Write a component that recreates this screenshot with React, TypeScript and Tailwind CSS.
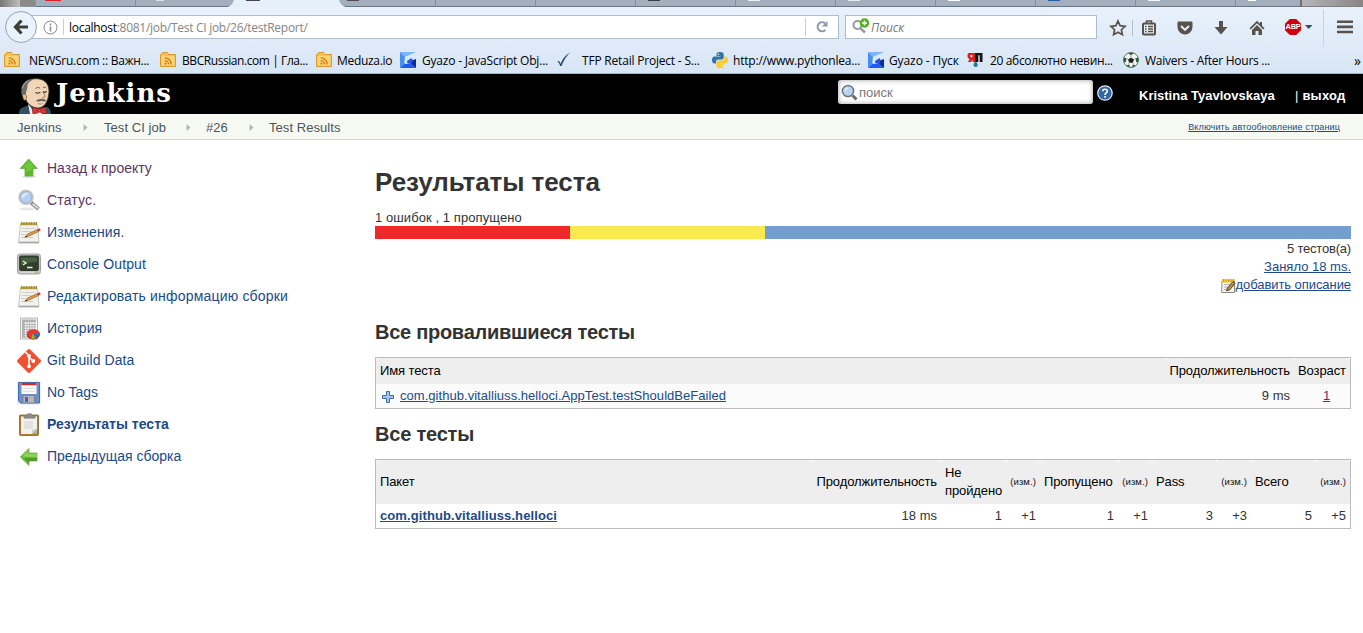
import React from "react";

/* ---------- shared ---------- */

const Rss = () => (
  <svg width="16" height="16" viewBox="0 0 16 16">
    <path d="M.5 2.500h1l1-2h5l1 2h7v12H.5z" fill="#f3c14e" stroke="#d99b2b" />
    <path d="M1.500 4h13v9.500h-13z" fill="#fbdc85" opacity=".7" />
    <circle cx="5.500" cy="11.600" r="1.100" fill="#d97a14" />
    <path d="M4.700 8.600a3.600 3.600 0 0 1 3.800 3.800M4.700 5.900a6.300 6.300 0 0 1 6.500 6.500" fill="none" stroke="#d97a14" strokeWidth="1.300" />
  </svg>
);

const Gyazo = () => (
  <svg width="16" height="16" viewBox="0 0 16 16">
    <path d="M0 0h16L5 5z" fill="#79b6fc" />
    <path d="M0 0l5 5-.5 6.500L0 16z" fill="#4690f2" />
    <path d="M0 16l4.500-4.500L11 12l5 4z" fill="#1c5cf2" />
    <path d="M16 16V6.500L11 8v4z" fill="#0b2a9c" />
    <path d="M16 .5L5 5l-.5 6.500L11 12l.5-3.500L16 7z" fill="#dce9fb" />
    <path d="M7 9l4.500-3 1.500 3-2 3-3.500-.5z" fill="#2456dc" />
  </svg>
);

const Check = () => (
  <svg width="16" height="16" viewBox="0 0 16 16">
    <path d="M1.500 9.500c1.500-1 2.300 0 3 2.500C7 6 10 3 14.500 0 10.500 4 7.500 8.500 5.500 14H4.200C3.500 12 2.800 10 1.500 9.500z" fill="#27486f" />
  </svg>
);

const Python = () => (
  <svg width="16" height="16" viewBox="0 0 16 16">
    <path d="M8 0C5 0 4.500 1 4.500 2.300V4H8.300v.6H2.500C1 4.600 0 6 0 8s1 3.500 2.300 3.500H4V9.600C4 8.300 5 7.500 6.200 7.500h3.600c1.100 0 1.900-.9 1.900-2V2.300C11.700.8 10.500 0 8 0z" fill="#3572a5" />
    <path d="M8 16c3 0 3.700-1 3.700-2.300V12H8v-.6h5.600C15.200 11.400 16 10 16 8s-1-3.500-2.200-3.500h-1.400v1.900c0 1.300-1 2.100-2.200 2.100H6.400c-1.100 0-2 .9-2 2v3.200C4.400 15.200 5.500 16 8 16z" fill="#fccb2f" />
    <circle cx="6.300" cy="2.200" r=".8" fill="#fff" />
    <circle cx="9.800" cy="13.800" r=".8" fill="#fff" />
  </svg>
);

const Drip = () => (
  <svg width="16" height="16" viewBox="0 0 16 16">
    <path d="M1.500 1H8v9H5.500V7.500L4 10H1l1.500-3C1 6.500.5 5.500.5 4S1 1.300 1.500 1zM3.500 3v2.300h2V3z" fill="#e01b22" />
    <path d="M8 1h7.500v9h-2.800V3.200h-1.400V10H8z" fill="#151515" />
    <path d="M8.500 9c2 2.500 2.200 3.300 2.200 4a2.100 2.100 0 0 1-4.200 0c0-.8.300-1.700 2-4z" fill="#1b7a9b" />
  </svg>
);

const Ball = () => (
  <svg width="16" height="16" viewBox="0 0 16 16">
    <circle cx="8" cy="8" r="7.500" fill="#f2f4f2" stroke="#5d7a63" />
    <path d="M8 5.500l3 2-1.200 3.300H6.200L5 7.500z" fill="#222" />
    <path d="M5 1h6L8 3.200zM.6 5.500l3 1-1 4-1.700-.8zM15.400 5.500l-3 1 1 4 1.700-.8zM3 13.500l3.300-.8.700 2.800zM13 13.500l-3.300-.8-.7 2.800z" fill="#2b5c36" />
    <path d="M8 3v2M5 7.200L3 6.500M11 7.200l2-.7M6.200 10.800l-1 2M9.800 10.800l1 2" stroke="#889" strokeWidth=".7" />
  </svg>
);

/* ---------- browser chrome ---------- */

const TabStrip = () => (
  <div className="flex h-[7px] w-full bg-[#a3afbc]">
    <div className="h-[7px] w-5 bg-linear-to-r from-[#777] to-[#c0bebc]" />
    <div className="h-[7px] w-[16px] border-r border-b border-[#8794a3] bg-[#8c8a88]" />
    <div className="h-[7px] w-[100px] border-r border-b border-[#7f8d9c] border-b-[#66758a] pl-[9px]">
      <div className="h-px w-4 bg-[#e01f26]" />
    </div>
    <div className="h-[7px] w-[98px] rounded-br-[7px] border-b border-[#66758a] pl-5">
      <div className="h-px w-2 bg-[#dfe3e6]" />
    </div>
    <div className="-mx-[6px] h-[7px] w-[117px] bg-[#e6f0fa] pl-[18px] [clip-path:polygon(6px_0,111px_0,113px_4px,117px_7px,0_7px,4px_4px)]">
      <div className="h-px w-[14px] bg-[#4a4650]" />
    </div>
    <div className="h-[7px] w-[97px] rounded-bl-[7px] border-r border-b border-r-[#7f8d9c] border-b-[#66758a] pl-[8px]">
      <div className="h-px w-3 bg-[#5a4650]" />
    </div>
    {["bg-transparent", "bg-transparent", "bg-[#3b4046]", "bg-[#eef1f3]", "bg-[#e9e9e9]", "bg-white", "bg-[#1d5fa8]", "bg-[#f5f5f5]"].map((c, i) => (
      <div key={i} className="h-[7px] w-[100px] border-r border-b border-r-[#7f8d9c] border-b-[#66758a] pl-3">
        <div className={"h-px w-3 " + c} />
      </div>
    ))}
    <div className="h-[7px] w-[66px] border-r-2 border-b border-r-[#6d6f75] border-b-[#66758a] pl-3">
      <div className="h-px w-2 bg-white" />
    </div>
    <div className="h-[7px] flex-1 border-b border-[#7c7f85] bg-linear-to-r from-[#b5b5b8] to-[#8a8684]" />
  </div>
);

const NavBar = () => (
  <div className="flex h-10 items-center pt-px">
    <div className="relative z-10 -mt-px ml-[5px] flex h-8 w-8 shrink-0 items-center justify-center rounded-full border border-[#8fa4bb] bg-[#eaf2fb]">
      <svg width="16" height="16" viewBox="0 0 16 16">
        <path d="M8.500 1.500L2.500 8l6 6.500M3 8h12" fill="none" stroke="#3f3d37" strokeWidth="3.200" />
      </svg>
    </div>
    <div className="-mt-px -ml-[7px] flex h-6 w-[809px] items-center border border-[#a9bcd0] bg-white">
      <svg className="ml-[12px]" width="15" height="15" viewBox="0 0 15 15">
        <circle cx="7.500" cy="7.500" r="6.500" fill="none" stroke="#8c8c8c" />
        <path d="M7.500 3.500v2M7.500 6.500v5" stroke="#8c8c8c" strokeWidth="1.500" />
      </svg>
      <div className="ml-[5px] h-4 w-px bg-[#c9cdd2]" />
      <div className="ml-[5px] flex-1 pt-px font-['Open_Sans',sans-serif] text-[12px] tracking-[-0.28px] whitespace-nowrap text-[#858585]">
        <span className="text-black">localhost</span>:8081/job/Test CI job/26/testReport/
      </div>
      <div className="h-[18px] w-px bg-[#c5cdd6]" />
      <svg className="mx-[9px]" width="14" height="14" viewBox="0 0 14 14">
        <path d="M10.500 9.800A4.500 4.500 0 1 1 10 3.300" fill="none" stroke="#8995a3" strokeWidth="2" />
        <path d="M12.500 1v5.500H7z" fill="#8995a3" />
      </svg>
    </div>
    <div className="-mt-px ml-[6px] flex h-6 w-[252px] items-center border border-[#a9bcd0] bg-white">
      <svg className="mb-px ml-[6px]" width="18" height="18" viewBox="0 0 18 18">
        <circle cx="5.500" cy="7" r="4" fill="none" stroke="#999" strokeWidth="2" />
        <path d="M8.500 10.500l4.500 4" stroke="#999" strokeWidth="2.500" />
        <circle cx="12.500" cy="5" r="4.700" fill="#4fb01e" />
        <path d="M12.500 2.500v5M10 5h5" stroke="#fff" strokeWidth="1.500" />
      </svg>
      <span className="ml-px pt-px font-['Open_Sans',sans-serif] text-[12px] text-[#767676] italic">Поиск</span>
    </div>
    <div className="ml-[12px] flex flex-1 items-center text-[#57534a]">
      <svg width="18" height="18" viewBox="0 0 18 18">
        <path d="M9 2l2.100 4.700 5 .6-3.700 3.400 1 5L9 13.200l-4.400 2.500 1-5L1.900 7.300l5-.6z" fill="none" stroke="#57534a" strokeWidth="1.700" />
      </svg>
      <div className="ml-[5px] h-4 w-px bg-[#b4c0cd]" />
      <svg className="ml-[8px]" width="16" height="16" viewBox="0 0 16 16">
        <path d="M5.500 3V1h5v2" fill="none" stroke="#57534a" strokeWidth="1.500" />
        <rect x="2" y="3.500" width="12" height="11" rx="1" fill="none" stroke="#57534a" strokeWidth="2" />
        <path d="M4 6.500h1.500M7 6.500h5M4 9h1.500M7 9h5M4 11.500h1.500M7 11.500h5" stroke="#57534a" strokeWidth="1.300" />
      </svg>
      <svg className="ml-[20px]" width="16" height="16" viewBox="0 0 16 16">
        <path d="M1.500 1.500h13a1 1 0 0 1 1 1V7a7.500 7.500 0 0 1-15 0V2.500a1 1 0 0 1 1-1z" fill="#57534a" />
        <path d="M4 6l4 3.800L12 6" fill="none" stroke="#e5eef8" strokeWidth="2" />
      </svg>
      <svg className="ml-[20px]" width="16" height="16" viewBox="0 0 16 16">
        <path d="M6 1h4v6h4.500L8 14.500 1.500 7H6z" fill="#57534a" />
      </svg>
      <svg className="ml-[20px]" width="16" height="16" viewBox="0 0 16 16">
        <path d="M8 .8L.5 8.300l1.200 1.200L8 3.300l6.300 6.200 1.200-1.200-2.500-2.500V2h-2v1.800z" fill="#57534a" />
        <path d="M8 5l5 5v5H9.500v-4h-3v4H3v-5z" fill="#57534a" />
      </svg>
      <div className="-mt-px ml-[20px] flex h-4 w-4 items-center justify-center bg-[#d0000c] [clip-path:polygon(30%_0,70%_0,100%_30%,100%_70%,70%_100%,30%_100%,0_70%,0_30%)]">
        <span className="font-['Liberation_Sans',sans-serif] text-[7.5px] leading-none font-bold tracking-[-0.3px] text-white">ABP</span>
      </div>
      <svg className="-mt-px ml-1" width="8" height="4" viewBox="0 0 8 4">
        <path d="M0 0h7.500L3.700 4z" fill="#3c4a5a" />
      </svg>
      <div className="ml-[10px] h-9 w-px bg-[#c6d3e0]" />
      <svg className="mb-[2px] ml-[13px]" width="16" height="14" viewBox="0 0 16 14">
        <path d="M0 1.700h16M0 6.900h16M0 12h16" stroke="#57534a" strokeWidth="2.600" />
      </svg>
    </div>
  </div>
);

const bookmarks = [
  { icon: <Rss />, text: "NEWSru.com :: Важн...", box: "w-[156px]", gap: "ml-[9px]", fit: "tracking-[-0.26px]" },
  { icon: <Rss />, text: "BBCRussian.com | Гла...", box: "w-[156px]", gap: "ml-[6px]", fit: "tracking-[-0.43px]" },
  { icon: <Rss />, text: "Meduza.io", box: "w-[84px]", gap: "ml-[5px]", fit: "tracking-[-0.3px]" },
  { icon: <Gyazo />, text: "Gyazo - JavaScript Obj...", box: "w-[156px]", gap: "ml-[6px]", fit: "tracking-[-0.2px]" },
  { icon: <Check />, text: "TFP Retail Project - S...", box: "w-[156px]", gap: "ml-[10px]", fit: "tracking-[-0.2px]" },
  { icon: <Python />, text: "http://www.pythonlea...", box: "w-[156px]", gap: "ml-[5px]", fit: "tracking-[-0.2px]" },
  { icon: <Gyazo />, text: "Gyazo - Пуск", box: "w-[99px]", gap: "ml-[5px]", fit: "tracking-[-0.1px]" },
  { icon: <Drip />, text: "20 абсолютно невин...", box: "w-[156px]", gap: "ml-[7px]", fit: "tracking-[-0.35px]" },
  { icon: <Ball />, text: "Waivers - After Hours ...", box: "w-[231px]", gap: "ml-[6px]", fit: "tracking-[-0.26px]" },
];

const Bookmarks = () => (
  <div className="flex h-[27px] items-center overflow-hidden border-b border-[#a7b3c0] pl-1 font-['Open_Sans',sans-serif] text-[12px] text-black">
    {bookmarks.map((b) => (
      <div key={b.text} className={"flex shrink-0 items-center " + b.box}>
        {b.icon}
        <span className={"pt-[2px] whitespace-nowrap " + b.gap + " " + b.fit}>{b.text}</span>
      </div>
    ))}
    <span className="text-[14px]">»</span>
  </div>
);

/* ---------- Jenkins header ---------- */

const Butler = () => (
  <svg width="34" height="36" viewBox="0 0 34 36">
    <path d="M1 36c0-4 1.500-6 5-7l5-2 10 3 8-1c2.500 1 4 3 4 7z" fill="#335061" />
    <path d="M10 25l5 8 9-1v4H12z" fill="#f0ece8" />
    <path d="M4 17C2 10 5 3.500 11 1.800 16 .2 23 0 27 3.500c3.500 3 4.500 8 3.800 12.500-.6 5-2.800 13-9.800 14-5 .5-11-3-13-8z" fill="#f0d6b7" stroke="#3b322c" strokeWidth=".9" />
    <path d="M4.500 17.500C2.500 10 5.500 4 11.500 2 14 1.300 15 1.300 15.500 1.500 11 3 9.500 6 9.300 9c-.2 3-1.300 4-1.500 7.500z" fill="#6d6b6d" />
    <path d="M4.500 10c1-3 3-5.500 6-7" fill="none" stroke="#a4a2a3" />
    <path d="M4.500 17.500c1-2 4-1.500 4 1.500s-2 4-3 2.500z" fill="#e8c49f" stroke="#6b4d3a" strokeWidth=".7" />
    <path d="M17.500 10.500c1.500-1.300 3-1.300 4.500-.3M25 9.800c1.300-.9 2.500-.7 3.500.2" fill="none" stroke="#6b5242" strokeWidth=".9" />
    <path d="M17.500 14.500c1.700 1 3.500.8 4.800-.3M25 13.800c1.200.8 2.700.6 3.700-.4" fill="none" stroke="#2b2623" strokeWidth="1.100" />
    <path d="M25 14.500c1 2 3 3 1.800 4.700l-2.500.2" fill="none" stroke="#a67c58" />
    <path d="M17.500 22.500c2.500-.3 4-2.300 6-1.500 1.500-.6 3.500 0 5 1.800-1.700 1-3.500.8-5 0-1.500 1-4 1.300-6-.3z" fill="#6e655f" />
    <path d="M20 25.500c1.500.9 3.500.8 4.500 0" fill="none" stroke="#b7745c" />
    <path d="M15 29.500c2 0 4.500 1 6 2.300 1.800-1.500 4-2.300 6.500-2.300.8 2 .8 4.500.3 6.500-2.300-.3-4.800-1-6.500-2.300-1.800 1.300-4 2.300-6.300 2.300-.6-2-.6-4.500 0-6.500z" fill="#d33833" stroke="#8b1416" strokeWidth=".6" />
    <circle cx="21.300" cy="32.600" r="1.700" fill="#ef3d3a" stroke="#8b1416" strokeWidth=".5" />
  </svg>
);

const Header = () => (
  <div className="flex h-10 bg-black font-['Liberation_Sans',sans-serif] text-white">
    <div className="flex w-[838px] pl-[18px]">
      <div className="mt-1 h-9">
        <Butler />
      </div>
      <span className="ml-[4px] font-['DejaVu_Serif',serif] text-[26px] leading-[39px] font-bold tracking-[0.95px]">Jenkins</span>
    </div>
    <div className="mt-[6px] flex h-6 w-[255px] items-center rounded-[3px] bg-white pl-[3px] shadow-[inset_0_0_5px_#999]">
      <svg width="17" height="17" viewBox="0 0 17 17">
        <circle cx="7" cy="7" r="5.600" fill="#b9d3f2" stroke="#6d7680" strokeWidth="1.500" />
        <path d="M11.500 11.500l4 3.800" stroke="#6c6c6c" strokeWidth="3" />
        <path d="M4 7a3 3 0 0 1 3-3" stroke="#fff" fill="none" />
      </svg>
      <span className="ml-px pt-px text-[13px] text-[#777]">поиск</span>
    </div>
    <svg className="mt-[11px] ml-[4px]" width="16" height="16" viewBox="0 0 16 16">
      <circle cx="8" cy="8" r="7.200" fill="#3465a4" stroke="#dfe7f2" strokeWidth="1.300" />
      <path d="M5.700 6.300C5.700 3.500 10.300 3.500 10.300 6.200 10.300 8 8 7.800 8 10" fill="none" stroke="#fff" strokeWidth="1.600" />
      <rect x="7.200" y="11" width="1.700" height="1.700" fill="#fff" />
    </svg>
    <div className="ml-[26px] flex pt-[12px] text-[13px] leading-[19px] font-bold">
      <span className="w-[156px] whitespace-nowrap">Kristina Tyavlovskaya</span>
      <span className="font-normal">|</span>
      <span className="ml-[4px] tracking-[0.2px]">выход</span>
    </div>
  </div>
);

const Arrow = () => (
  <svg width="5" height="7" viewBox="0 0 5 7">
    <path d="M.5 0v7L4.500 3.500z" fill="#b5b5b0" />
  </svg>
);

const Breadcrumbs = () => (
  <div className="flex h-[26px] items-center border-b border-[#d3d7cf] bg-[#f6faf2] pt-[2px] pl-[17px] font-['Liberation_Sans',sans-serif] text-[13px] tracking-[0.06px] text-[#4d545d]">
    <span className="w-[66px]">Jenkins</span>
    <Arrow />
    <span className="ml-[16px] w-[82px] whitespace-nowrap">Test CI job</span>
    <Arrow />
    <span className="ml-[15px] w-[43px]">#26</span>
    <Arrow />
    <span className="ml-[15px] flex-1">Test Results</span>
    <a className="mr-[23px] pt-px text-[9px] tracking-[0.13px] text-[#204a87] underline">Включить автообновление страниц</a>
  </div>
);

/* ---------- side panel ---------- */

const Notepad = () => (
  <svg width="24" height="24" viewBox="0 0 24 24">
    <path d="M3.500 3.500h17l1.500 17.500H1.500z" fill="#f1f1ee" stroke="#b9b9b4" strokeWidth=".8" />
    <path d="M1.500 21.800h20.500" stroke="#8e8e88" />
    <path d="M3.500 1.500h16.500v2.700H3.500z" fill="#bfa53e" />
    <path d="M4.500 1v3M7 1v3M9.500 1v3M12 1v3M14.500 1v3M17 1v3M19.500 1v3" stroke="#8a7726" strokeWidth=".7" />
    <path d="M4.500 7.500h14M4.500 10.500h10M4 13.500h5M4 16.500h12" stroke="#cfcfcb" />
    <path d="M8.500 16l2-3 10-4.500 1 2-10 4.800z" fill="#dd9a46" stroke="#8d6226" strokeWidth=".7" />
    <path d="M20.200 8.500l2.600-1.200.9 2-2.500 1.200z" fill="#d9342b" />
    <path d="M7.500 16.500l1.400-1.800.9 1.200z" fill="#222" />
  </svg>
);

const SmallNotepad = () => (
  <svg width="15" height="16" viewBox="0 0 15 16">
    <path d="M1 3h12.500v11.500H.7z" fill="#f3f3f1" stroke="#8b8b86" />
    <path d="M1 1.200h12.500V4.500H1z" fill="#f0cb2c" />
    <path d="M2.500 1v3M5 1v3M7.500 1v3M10 1v3M12.500 1v3" stroke="#b8941a" strokeWidth=".8" />
    <path d="M3 6.500h6M3 9h3.500M3 11.500h2.500" stroke="#b5b5b0" />
    <path d="M5.500 12.800l.8-2.800L12 3.500l2.200 1.800L8.500 12z" fill="#b58d48" stroke="#4a3919" strokeWidth=".9" />
  </svg>
);

const UpIcon = () => (
  <svg width="24" height="24" viewBox="0 0 24 24">
    <ellipse cx="12" cy="19.700" rx="7" ry="1.200" fill="#ddd" />
    <path d="M11.700 2L20.200 11.500H16v7.500H8v-7.500H3.200z" fill="#5cb82a" stroke="#63b03a" strokeWidth=".8" />
    <path d="M11.700 4L6 10.500h3.500v5l5.500-3v-2h3z" fill="#86d74a" opacity=".5" />
  </svg>
);

const SearchIcon = () => (
  <svg width="24" height="24" viewBox="0 0 24 24">
    <ellipse cx="10" cy="20" rx="8" ry="1.500" fill="#e8e8e8" />
    <path d="M14 13.500l7.500 6.500" stroke="#8c8c8c" strokeWidth="3.800" />
    <path d="M15.500 14.800l5.500 4.500" stroke="#dcdcdc" strokeWidth="2" />
    <circle cx="9" cy="8.300" r="6.800" fill="#b4cff0" stroke="#c3c5c7" strokeWidth="2" />
    <circle cx="9" cy="8.300" r="5.800" fill="none" stroke="#8fa5c0" strokeWidth=".6" />
    <path d="M4.500 9a5 5 0 0 1 8-4c-4 0-5 4-8 4z" fill="#dbe9fa" />
  </svg>
);

const ConsoleIcon = () => (
  <svg width="24" height="24" viewBox="0 0 24 24">
    <rect x=".5" y="1" width="23" height="20" rx="2.500" fill="#c3c4c0" stroke="#a3a4a0" />
    <rect x="2.700" y="3" width="18.600" height="14.500" rx="1" fill="#2f4229" stroke="#333" />
    <path d="M4 4.500h16v4C14 8.500 9 11.500 4 12.500z" fill="#5a7352" opacity=".6" />
    <path d="M6 8l3 2L6 12M10 14.500h5.500" stroke="#e8f4e0" strokeWidth="1.300" fill="none" />
    <path d="M3 19.300h14" stroke="#dcddd9" />
    <circle cx="20" cy="19.300" r=".8" fill="#7ac943" />
  </svg>
);

const ChartIcon = () => (
  <svg width="24" height="24" viewBox="0 0 24 24">
    <path d="M3.500 1h17v21h-17z" fill="#f4f4f3" stroke="#b5b6b3" />
    <path d="M5 2.500h14v2.500H5zM5 5h2.200v15.500H5z" fill="#aeb0ae" />
    <path d="M5 7.500h14M5 10h14M5 12.500h14M5 15h14M5 17.500h13M5 20h13M7.500 3v18M10 3v18M12.500 3v18M15 3v18M17.500 3v18" stroke="#b3b5b3" strokeWidth=".9" />
    <ellipse cx="16.300" cy="17.700" rx="6.500" ry="4.800" fill="#a80f0f" />
    <ellipse cx="16.300" cy="16.800" rx="6.500" ry="4.500" fill="#e23a33" />
    <path d="M16.300 17l6.200-1c.8 2.500-.8 4-2.700 4.800z" fill="#3c6db3" />
    <path d="M16 16.500l2.500 5c-2 .5-3.500.3-4.500 0z" fill="#7cc231" />
  </svg>
);

const GitIcon = () => (
  <svg width="24" height="24" viewBox="0 0 24 24">
    <path d="M10.800.6a1.700 1.700 0 0 1 2.400 0l10.200 10.200a1.700 1.700 0 0 1 0 2.400L13.200 23.400a1.700 1.700 0 0 1-2.400 0L.6 13.200a1.700 1.700 0 0 1 0-2.400z" fill="#f05133" />
    <path d="M8.500 3l3.500 4v10M12 8l4 4" stroke="#fff" strokeWidth="1.600" fill="none" />
    <circle cx="12" cy="7" r="1.900" fill="#fff" />
    <circle cx="12" cy="17.300" r="1.900" fill="#fff" />
    <circle cx="16.300" cy="12" r="1.900" fill="#fff" />
  </svg>
);

const FloppyIcon = () => (
  <svg width="24" height="24" viewBox="0 0 24 24">
    <rect width="24" height="24" fill="#efeff1" />
    <path d="M1.500 1.500h21v20.500h-19l-2-2z" fill="#6a90c9" stroke="#4a6da5" />
    <path d="M4.500 2h15v11h-15z" fill="#fdfdfd" />
    <path d="M4.500 2h15v2.200h-15z" fill="#e2231f" />
    <path d="M6 7.500h12M6 10.200h12" stroke="#d8d8d8" />
    <path d="M6 14.500h11.500V22H6z" fill="#b4b8bd" stroke="#787d85" strokeWidth=".8" />
    <path d="M8 16h3v5H8z" fill="#4a6796" />
  </svg>
);

const ClipboardIcon = () => (
  <svg width="24" height="24" viewBox="0 0 24 24">
    <rect x="2.500" y="2" width="19" height="20.500" rx="1" fill="#b07c31" stroke="#8a6021" strokeWidth=".8" />
    <path d="M4 3.500h16v17.500H4z" fill="#f1f1ee" />
    <path d="M7 8h9v8H7z" fill="#e2e2df" />
    <path d="M20 16v5h-5.500z" fill="#a9aaa6" />
    <path d="M14.500 21l1-4.500 4.500-.5z" fill="#cfcfcb" />
    <path d="M7 2.500h2.500L10.500.7h4l1 1.800H18v2.800H7z" fill="#8a8c88" stroke="#777" strokeWidth=".5" />
  </svg>
);

const LeftIcon = () => (
  <svg width="24" height="24" viewBox="0 0 24 24">
    <path d="M3.200 12L12 3.500v4.500h8v8h-8v4.500z" fill="#6bbd3a" stroke="#7ab356" strokeWidth=".8" />
    <path d="M5.500 11.500L11 6v3h8.500v3z" fill="#a1dc70" opacity=".7" />
    <path d="M7 13h13v3h-8v3z" fill="#4b9422" opacity=".8" />
  </svg>
);

const tasks = [
  { icon: <UpIcon />, text: "Назад к проекту", cls: "text-[#5c3566]" },
  { icon: <SearchIcon />, text: "Статус.", cls: "tracking-[0.15px] text-[#5c3566]" },
  { icon: <Notepad />, text: "Изменения.", cls: "tracking-[0.1px] text-[#204a87]" },
  { icon: <ConsoleIcon />, text: "Console Output", cls: "tracking-[0.12px] text-[#204a87]" },
  { icon: <Notepad />, text: "Редактировать информацию сборки", cls: "tracking-[0.18px] text-[#204a87]" },
  { icon: <ChartIcon />, text: "История", cls: "tracking-[0.15px] text-[#204a87]" },
  { icon: <GitIcon />, text: "Git Build Data", cls: "tracking-[0.07px] text-[#204a87]" },
  { icon: <FloppyIcon />, text: "No Tags", cls: "text-[#204a87]" },
  { icon: <ClipboardIcon />, text: "Результаты теста", cls: "font-bold tracking-[0.02px] text-[#204a87]" },
  { icon: <LeftIcon />, text: "Предыдущая сборка", cls: "text-[#204a87]" },
];

const SidePanel = () => (
  <div className="flex w-[375px] shrink-0 flex-col gap-2 pt-[17px] pl-[17px]">
    {tasks.map((t) => (
      <div key={t.text} className="flex h-6 items-center">
        {t.icon}
        <a className={"ml-[6px] pb-[2px] text-[14px] leading-5 whitespace-nowrap " + t.cls}>{t.text}</a>
      </div>
    ))}
  </div>
);

/* ---------- results ---------- */

const Th = ({ children, right, small }: { children: React.ReactNode; right?: boolean; small?: boolean }) => (
  <div
    className={
      "flex items-center rounded-t-[3px] bg-[#eee] px-1 " +
      (right ? "justify-end " : "") +
      (small ? "text-[9.5px] tracking-[0.1px] text-[#111]" : "tracking-[-0.1px] text-black")
    }
  >
    <span>{children}</span>
  </div>
);

const Td = ({ children }: { children: React.ReactNode }) => <div className="pr-1 text-right">{children}</div>;

const Main = () => (
  <div className="w-[976px] pt-[26px] text-[13px] leading-[18px] text-[#333]">
    <h1 className="text-[26px] leading-8 font-bold tracking-[-0.05px]">Результаты теста</h1>
    <div className="mt-[10px] h-[18px] pt-px tracking-[0.08px] whitespace-pre">1 ошибок , 1 пропущено</div>
    <div className="flex h-[13px] w-full">
      <div className="w-[195px] bg-[#ef2929]" />
      <div className="w-[195px] bg-[#fce94f]" />
      <div className="flex-1 bg-[#729fcf]" />
    </div>
    <div className="flex h-[55px] flex-col items-end pt-px">
      <span className="h-[18px] tracking-[-0.2px]">5 тестов(а)</span>
      <a className="h-[18px] text-[#204a87] underline">Заняло 18 ms.</a>
      <div className="flex h-[18px] text-[#204a87]">
        <div className="pt-[2px]">
          <SmallNotepad />
        </div>
        <a className="tracking-[-0.07px] underline">добавить описание</a>
      </div>
    </div>
    <h2 className="mt-[26px] text-[20px] leading-6 font-bold tracking-[-0.27px]">Все провалившиеся тесты</h2>
    <div className="mt-[13px] border border-[#bbb]">
      <div className="grid h-[26px] grid-cols-[790px_128px_56px]">
        <Th>Имя теста</Th>
        <Th right>Продолжительность</Th>
        <Th>Возраст</Th>
      </div>
      <div className="grid h-6 grid-cols-[790px_128px_56px] bg-[#fbfbfb] pt-[3px]">
        <div className="flex pl-[5px]">
          <svg className="mt-[3px] mr-[5px]" width="14" height="14" viewBox="0 0 14 14">
            <path d="M5.500 1.500h3v4h4v3h-4v4h-3v-4h-4v-3h4z" fill="#a9c6ea" stroke="#3d6ca8" />
          </svg>
          <a className="tracking-[0.04px] text-[#204a87] underline">com.github.vitalliuss.helloci.AppTest.testShouldBeFailed</a>
        </div>
        <Td>9 ms</Td>
        <div className="pl-[9px] text-center text-[#5c3566] underline">1</div>
      </div>
    </div>
    <h2 className="mt-[13px] text-[20px] leading-6 font-bold tracking-[-0.2px]">Все тесты</h2>
    <div className="mt-[13px] border border-[#bbb]">
      <div className="grid h-11 grid-cols-[437px_128px_65px_34px_78px_34px_65px_34px_65px_34px]">
        <Th>Пакет</Th>
        <Th right>Продолжительность</Th>
        <Th>Не пройдено</Th>
        <Th right small>(изм.)</Th>
        <Th>Пропущено</Th>
        <Th right small>(изм.)</Th>
        <Th>Pass</Th>
        <Th right small>(изм.)</Th>
        <Th>Всего</Th>
        <Th right small>(изм.)</Th>
      </div>
      <div className="grid h-6 grid-cols-[437px_128px_65px_34px_78px_34px_65px_34px_65px_34px] pt-[3px]">
        <a className="pl-1 font-bold tracking-[0.1px] text-[#204a87] underline">com.github.vitalliuss.helloci</a>
        <Td>18 ms</Td>
        <Td>1</Td>
        <Td>+1</Td>
        <Td>1</Td>
        <Td>+1</Td>
        <Td>3</Td>
        <Td>+3</Td>
        <Td>5</Td>
        <Td>+5</Td>
      </div>
    </div>
  </div>
);

export default function App() {
  return (
    <div className="h-[633px] w-[1363px] overflow-hidden bg-white font-['Liberation_Sans',sans-serif]">
      <div className="bg-linear-to-b from-[#ebf3fc] to-[#d7e5f5]">
        <TabStrip />
        <NavBar />
        <Bookmarks />
      </div>
      <Header />
      <Breadcrumbs />
      <div className="flex">
        <SidePanel />
        <Main />
      </div>
    </div>
  );
}
